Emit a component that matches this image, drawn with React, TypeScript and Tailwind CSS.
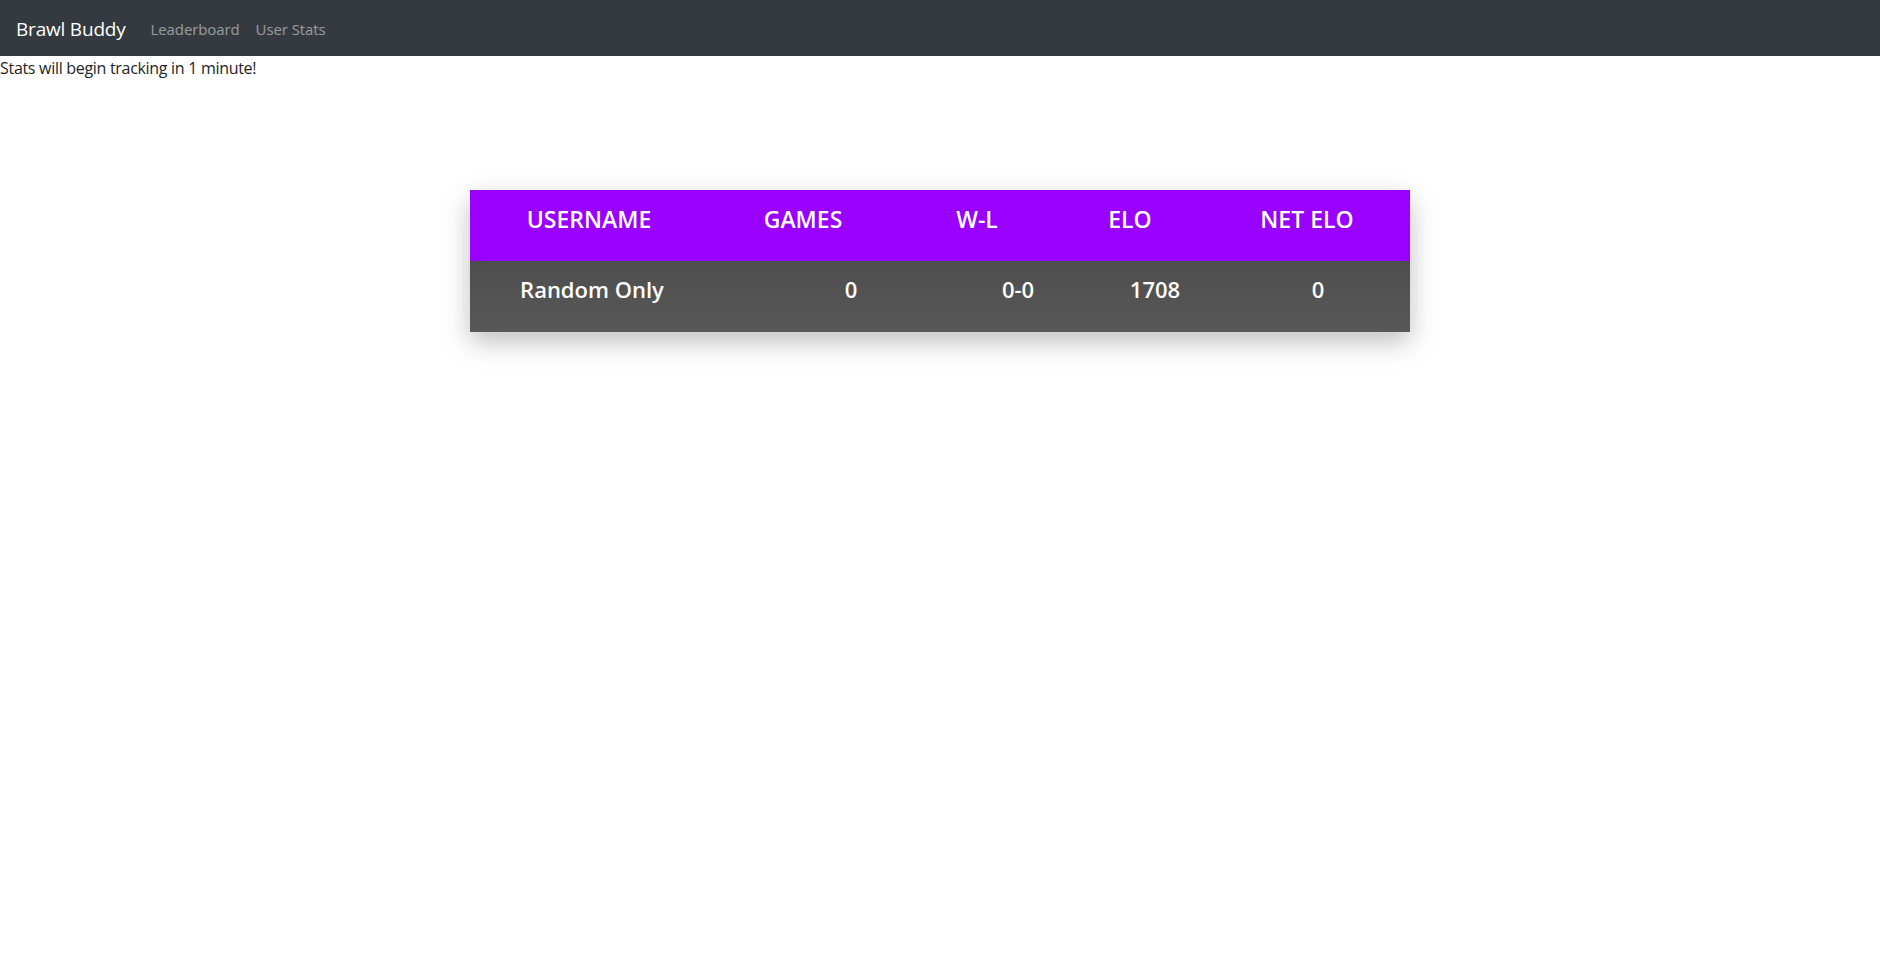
import React from "react";

const headers = [
  { label: "USERNAME", w: "w-[238px]" },
  { label: "GAMES", w: "w-[190px]" },
  { label: "W-L", w: "w-[158px]" },
  { label: "ELO", w: "w-[148px]" },
  { label: "NET ELO", w: "w-[206px]" },
];

export default function App() {
  return (
    <div className="min-h-[979px] bg-white font-['Open_Sans',sans-serif] text-[#212529]">
      <nav className="flex h-[56px] items-center bg-[#343a40] px-4 pt-[2px]">
        <span className="mr-[17px] text-[19px] leading-[30px] tracking-[-0.2px] text-white">Brawl Buddy</span>
        <a className="px-2 text-[15px] tracking-[-0.1px] text-white/50">Leaderboard</a>
        <a className="px-2 text-[15px] tracking-[-0.1px] text-white/50">User Stats</a>
      </nav>
      <p className="text-[16px] leading-6 tracking-[-0.3px]">Stats will begin tracking in 1 minute!</p>
      <div className="mx-auto mt-[110px] w-[940px] shadow-[0_10px_25px_rgba(0,0,0,0.25)]">
        <div className="flex h-[71px] items-center bg-[#9900ff] pb-[13px]">
          {headers.map((h) => (
            <div key={h.label} className={`${h.w} text-center text-[23px] font-semibold text-white`}>
              {h.label}
            </div>
          ))}
        </div>
        <div className="flex h-[71px] items-center bg-gradient-to-b from-[#4e4e4e] to-[#585858] pb-[14px] text-[22px] font-semibold text-white">
          <div className="w-[238px] pl-[6px] text-center">Random Only</div>
          <div className="w-[190px] pl-[96px] text-center">0</div>
          <div className="w-[158px] pl-[82px] text-center">0-0</div>
          <div className="w-[148px] pl-[50px] text-center">1708</div>
          <div className="w-[206px] pl-[22px] text-center">0</div>
        </div>
      </div>
    </div>
  );
}
